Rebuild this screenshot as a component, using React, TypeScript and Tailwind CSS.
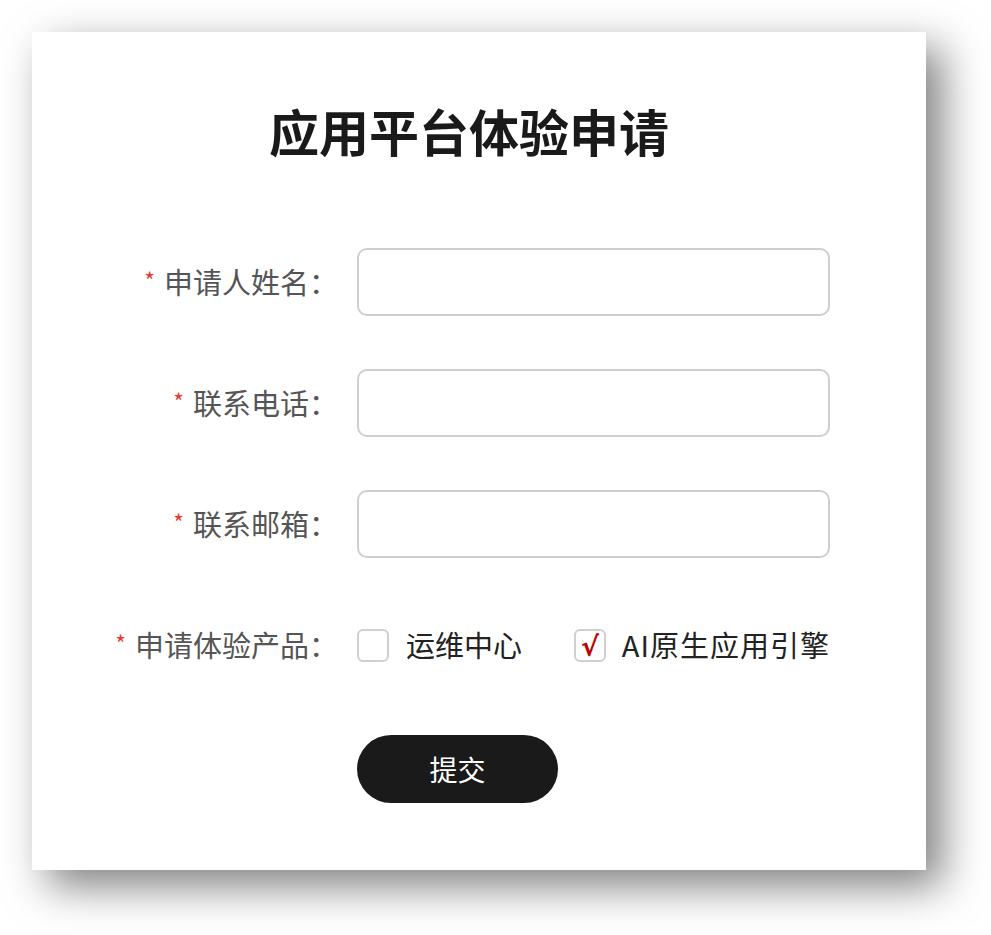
import React from "react";

const font = { fontFamily: '"Noto Sans CJK SC", "Noto Sans", sans-serif' };

function Label({ text }: { text: string }) {
  return (
    <div className="flex items-center justify-end text-[29px] text-[#555555] whitespace-nowrap">
      <span className="text-[#e53935] text-[23px] mr-[9px] -mt-[4px]">*</span>
      <span>{text}</span>
    </div>
  );
}

function Input() {
  return <div className="h-[68px] w-[473px] rounded-[10px] border-2 border-[#cfcfcf] bg-white" />;
}

export default function App() {
  return (
    <div className="min-h-[935px] w-[991px] bg-white" style={font}>
      <div className="pt-[32px] pl-[32px]">
        <div className="w-[894px] h-[838px] bg-white shadow-[16px_16px_40px_rgba(0,0,0,0.5)] flex flex-col items-center">
          <h1 className="mt-[61px] text-[50px] leading-[75px] font-bold text-[#1a1a1a] -ml-[20px]">
            应用平台体验申请
          </h1>
          <div className="mt-[80px] self-start grid grid-cols-[306px_473px] gap-x-[19px] gap-y-[53px] items-center">
            <Label text="申请人姓名：" />
            <Input />
            <Label text="联系电话：" />
            <Input />
            <Label text="联系邮箱：" />
            <Input />
            <Label text="申请体验产品：" />
            <div className="h-[68px] flex items-center text-[29px] text-[#222222] whitespace-nowrap">
              <div className="w-[33px] h-[33px] rounded-[6px] border-2 border-[#d0d0d0]" />
              <span className="ml-[17px]">运维中心</span>
              <div className="ml-[52px] w-[33px] h-[33px] rounded-[6px] border-2 border-[#d0d0d0] flex items-center justify-center">
                <span className="text-[#c00000] text-[27px] font-bold leading-none mt-[2px]" style={{ fontFamily: '"DejaVu Sans", sans-serif' }}>√</span>
              </div>
              <span className="ml-[16px] tracking-[1px]">AI原生应用引擎</span>
            </div>
            <div className="mt-[3px]" />
            <button className="mt-[3px] h-[68px] w-[201px] rounded-full bg-[#1a1a1a] text-white text-[28px]">提交</button>
          </div>
        </div>
      </div>
    </div>
  );
}
